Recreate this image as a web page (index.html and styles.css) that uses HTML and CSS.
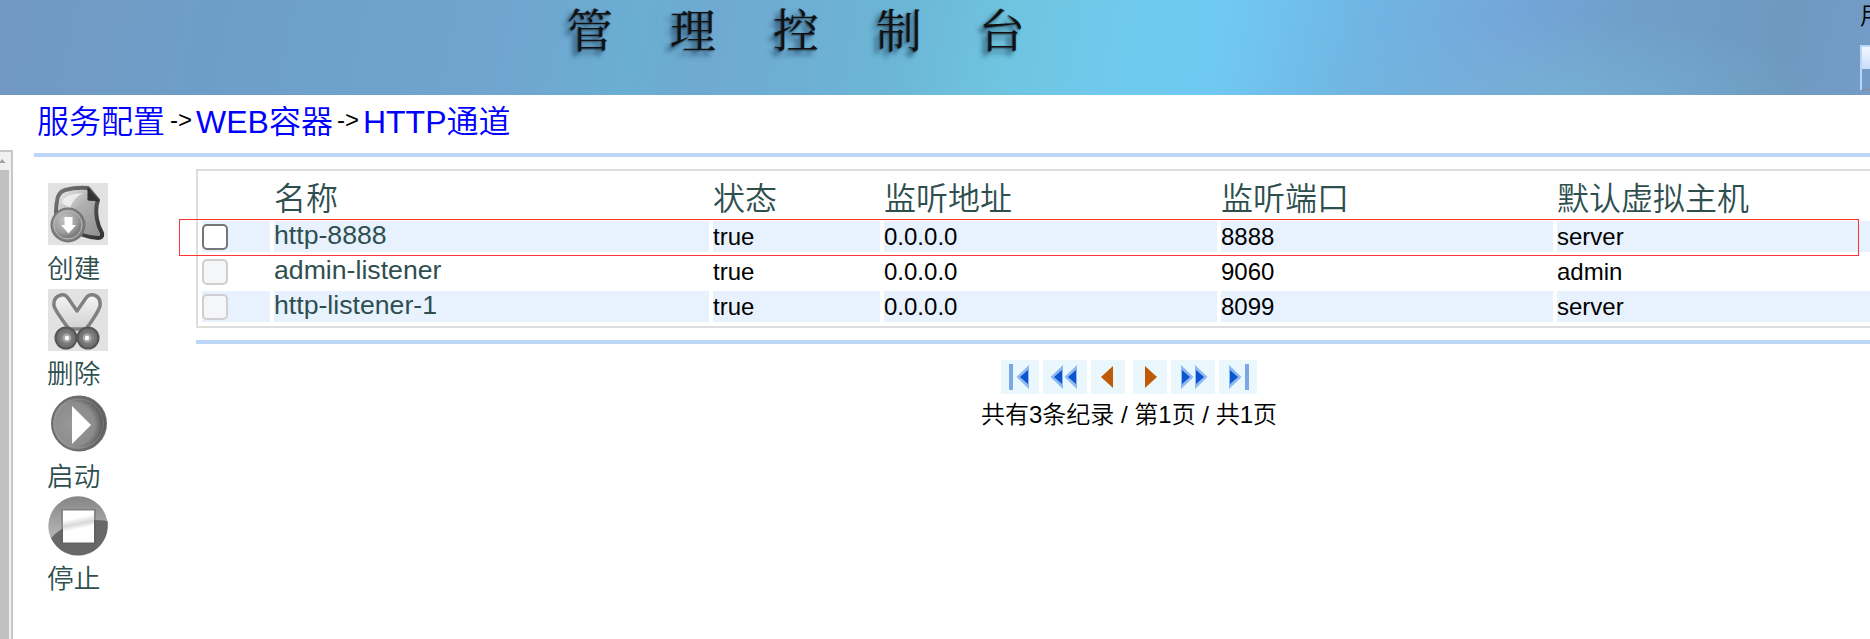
FILE: index.html
```html
<!DOCTYPE html>
<html lang="zh-CN">
<head>
<meta charset="utf-8">
<title>管理控制台</title>
<link rel="stylesheet" href="styles.css">
</head>
<body>
<header class="banner">
  <h1 class="title"><span>管</span><span>理</span><span>控</span><span>制</span><span>台</span></h1>
  <div class="user"><span class="user-label">用户</span><button class="user-button"></button></div>
</header>
<div class="body">
  <aside class="tree"><div class="scrollbar"><svg class="up" viewBox="0 0 9 18"><path d="M-1 11h6.500L2 7z" fill="#a0a0a0"/></svg><div class="thumb"></div></div></aside>
  <main class="main">
    <nav class="crumbs"><a>服务配置</a><span class="sep">-&gt;</span><a>WEB容器</a><span class="sep">-&gt;</span><a>HTTP通道</a></nav>
    <div class="columns">
      <div class="tools">
        <a class="tool create"><svg viewBox="0 0 60 62">
          <defs>
            <linearGradient id="g1" x1="0" y1="0" x2="1" y2="1"><stop offset="0" stop-color="#f4f4f4"/><stop offset=".45" stop-color="#b0b0b0"/><stop offset="1" stop-color="#8c8c8c"/></linearGradient>
            <linearGradient id="g2" x1="0" y1="0" x2="1" y2="1"><stop offset="0" stop-color="#777"/><stop offset="1" stop-color="#333"/></linearGradient>
            <radialGradient id="g3" cx=".4" cy=".35"><stop offset="0" stop-color="#c4c4c4"/><stop offset=".8" stop-color="#999"/><stop offset="1" stop-color="#808080"/></radialGradient>
          </defs>
          <path d="M0 0h60v62H0z" fill="#e2e2e2"/>
          <g class="soft-edge">
          <path d="M9 18Q10 9 17 7Q28 4 40 5L50 17Q47 25 49 36Q50 43 54 50Q55 55 50 55Q43 55 35 52L9 40Q7 29 9 18z" fill="url(#g1)" stroke="url(#g2)" stroke-width="4" stroke-linejoin="round"/>
          <path d="M40 5l11 13-11-1z" fill="#333" stroke="#333"/><path d="M14 20q1-9 21-10-9 4-13 15z" fill="#f4f4f4" opacity=".8"/>
          <circle cx="20" cy="42" r="16.500" fill="url(#g3)" stroke="#777" stroke-width="2"/><circle cx="20" cy="42" r="14" fill="none" stroke="#bbb"/>
          <path d="M16.500 34h8v8H28L20.500 50.500 13 42h3.500z" fill="#fff"/>
          </g>
        </svg><span>创建</span></a>
        <a class="tool delete"><svg viewBox="0 0 60 62">
          <defs><linearGradient id="g4" x1="0" y1="0" x2="0" y2="1"><stop offset="0" stop-color="#f5f5f5"/><stop offset="1" stop-color="#d0d0d0"/></linearGradient>
          <radialGradient id="g5"><stop offset="0" stop-color="#a8a8a8"/><stop offset=".6" stop-color="#787878"/><stop offset="1" stop-color="#686868"/></radialGradient></defs>
          <path d="M0 0h60v62H0z" fill="#e2e2e2"/>
          <g class="soft-edge">
          <path d="M13 6Q5 8 6 17Q8 23 21 40H38Q50 24 52 17Q53 8 46 6Q41 5 38 9L29 22L20 9Q17 5 13 6z" fill="url(#g4)" stroke="#808080" stroke-width="3.500" stroke-linejoin="round"/>
          <g fill="url(#g5)" stroke="#555" stroke-width="2"><circle cx="18" cy="49" r="10.500"/><circle cx="40" cy="49" r="10.500"/></g>
          <g fill="#fff" stroke="#aaa" stroke-width="2"><circle cx="19" cy="49" r="3.200"/><circle cx="39" cy="49" r="3.200"/></g>
          </g>
        </svg><span>删除</span></a>
        <a class="tool start"><svg viewBox="0 0 60 60">
          <defs><radialGradient id="g6" cx=".38" cy=".52" r=".62"><stop offset="0" stop-color="#999"/><stop offset=".65" stop-color="#8c8c8c"/><stop offset="1" stop-color="#484848"/></radialGradient></defs>
          <g class="soft-edge">
          <circle cx="31" cy="29.500" r="27" fill="url(#g6)" stroke="#6c6c6c" stroke-width="2"/><circle cx="31" cy="29.500" r="24.500" fill="none" stroke="#a5a5a5" opacity=".35" stroke-width="1.500"/>
          <path d="M24 12L43 31 24 50z" fill="#fff"/>
          </g>
        </svg><span>启动</span></a>
        <a class="tool stop"><svg viewBox="0 0 60 60">
          <defs><linearGradient id="g7" x1="0" y1="0" x2="0" y2="1"><stop offset="0" stop-color="#858585"/><stop offset=".6" stop-color="#b0b0b0"/></linearGradient>
          <linearGradient id="g8" x1="0" y1="0" x2="0.200" y2="1"><stop offset="0" stop-color="#fff"/><stop offset=".3" stop-color="#fff"/><stop offset=".5" stop-color="#d8d8d8"/><stop offset=".65" stop-color="#fff"/></linearGradient></defs>
          <g class="soft-edge">
          <circle cx="30" cy="30" r="29.700" fill="url(#g7)"/>
          <path d="M3 42Q24 20 59.700 25V30A29.700 29.700 0 0 1 3 42z" fill="#686868"/>
          <path d="M13 13h35v35H13z" fill="#555" opacity=".3"/><path d="M15 14.500h31v32H15z" fill="url(#g8)"/>
          </g>
        </svg><span>停止</span></a>
      </div>
      <div class="content">
        <table class="list">
          <colgroup><col class="c1"><col class="c2"><col class="c3"><col class="c4"><col class="c5"><col class="c6"></colgroup>
          <tr class="head"><th></th><th>名称</th><th>状态</th><th>监听地址</th><th>监听端口</th><th>默认虚拟主机</th></tr>
          <tr class="odd"><td><i class="box"></i></td><td class="name">http-8888</td><td>true</td><td>0.0.0.0</td><td>8888</td><td>server</td></tr>
          <tr><td><i class="box off"></i></td><td class="name">admin-listener</td><td>true</td><td>0.0.0.0</td><td>9060</td><td>admin</td></tr>
          <tr class="odd"><td><i class="box off"></i></td><td class="name">http-listener-1</td><td>true</td><td>0.0.0.0</td><td>8099</td><td>server</td></tr>
        </table>
        <div class="highlight"></div>
        <div class="rule"></div>
        <div class="pager">
          <svg viewBox="0 0 38 34" width="38"><path class="bar" d="M8 4h4v26H8z"/><path class="soft" d="M28 5v24L15.500 17z"/><path class="blue" d="M27 10v14l-8-7z"/></svg>
          <svg viewBox="0 0 44 34" width="44"><path class="soft" d="M20 5v24L7.500 17zM34 5v24L21.500 17z"/><path class="blue" d="M19 10v14l-8-7zM33 10v14l-8-7z"/></svg>
          <svg viewBox="0 0 34 34" width="34"><path class="orange" d="M22 6v22L10 17z"/></svg>
          <svg class="next" viewBox="0 0 34 34" width="34"><path class="orange" d="M12 6v22l12-11z"/></svg>
          <svg viewBox="0 0 44 34" width="44"><path class="soft" d="M10 5v24l12.500-12zM24 5v24l12.500-12z"/><path class="blue" d="M11 10v14l8-7zM25 10v14l8-7z"/></svg>
          <svg viewBox="0 0 38 34" width="38"><path class="soft" d="M10 5v24l12.500-12z"/><path class="blue" d="M11 10v14l8-7z"/><path class="bar" d="M26 4h4v26h-4z"/></svg>
        </div>
        <p class="summary">共有3条纪录 / 第1页 / 共1页</p>
      </div>
    </div>
  </main>
</div>
</body>
</html>
```
FILE: styles.css
```css
* { box-sizing: border-box; }
body { margin: 0; height: 639px; overflow: hidden; background: #fff; color: #000;
  font: 350 24px/30px "Liberation Sans", "Noto Sans CJK SC", sans-serif; }
.banner { height: 95px; display: flex; justify-content: space-between;
  background:
    radial-gradient(ellipse 260px 85px at 1560px 100px, rgba(122,184,214,.6), transparent),
    linear-gradient(102deg, #7299c2 0, #6d9fc9 14%, #70a5d0 27%, #6aaed2 34%, #6fa9d1 38%, #6cb6d6 48%, #6fc5e0 54%, #70caee 60%, #70c9f1 65%, #70b6e4 72%, #74a6da 80%, #709fca 86%, #6e99bf 95%, #739dc8 100%); }
.title { margin: 2px 0 0 567px; display: flex; gap: 57px; color: #111;
  font: 400 46px/50px "Noto Serif CJK SC", "Noto Sans CJK SC", serif;
  text-shadow: -5px 5px 5px rgba(20,50,80,.75), -1px 1px 2px rgba(0,0,0,.6); }
.user { width: 10px; height: 95px; white-space: nowrap; overflow: hidden; }
.user-label { display: block; height: 45px; padding-top: 1px; }
.user-button { display: block; width: 80px; height: 46px; border: 2px solid #bcd6f8; border-bottom-color: #8290a8; border-radius: 0; background: linear-gradient(#f2f7ff, #c9ddfa 22px, #729bc5 22px); }
.body { display: flex; height: 544px; }
.tree { width: 34px; padding-top: 55px; }
.scrollbar { width: 13px; height: 489px; border: 2px solid #c8c8c8; border-width: 2px 2px 0 0; background: #f0f0f0; }
.up { display: block; width: 9px; height: 18px; }
.thumb { width: 9px; height: 480px; background: #c1c1c1; }
.main { flex: 1; min-width: 0; }
.crumbs { display: flex; align-items: flex-start; height: 62px; padding: 3px 0 0 3px; border-bottom: 4px solid #bcd6f8; }
.crumbs a { font-size: 32px; line-height: 48px; color: #00f; white-space: nowrap; }
.sep { margin: 0 4px; line-height: 44px; }
.sep:first-of-type { margin-left: 5px; }
.columns { display: flex; }
.tools { width: 162px; padding: 26px 0 0 14px; color: #2f4f4f; }
.tool { display: flex; flex-direction: column; height: 103px; font-size: 26.67px; line-height: 48px; }
.tool span { height: 42px; margin-left: -1px; }
.tool svg { display: block; width: 60px; height: 60px; flex: none; }
.soft-edge { filter: blur(.6px); }
.create { height: 105px; }
.delete { height: 104px; padding-top: 1px; }
.create svg, .delete svg { height: 62px; }
.delete span { margin-top: -1px; }
.start { padding-top: 2px; }
.start span { margin-top: -1px; }
.stop { padding-top: 1px; }
.stop span { margin-top: -1px; }
.content { flex: 1; min-width: 0; padding-top: 12px; }
.list { width: 1729px; table-layout: fixed; border: 2px solid #ddd; border-collapse: separate; border-spacing: 4px; }
.c1 { width: 68px; } .c2 { width: 435px; } .c3 { width: 167px; } .c4 { width: 333px; } .c5 { width: 332px; }
.list th { height: 42px; padding: 6px 0 0; text-align: left; font-size: 32px; line-height: 36px; font-weight: 350; color: #2f4f4f; }
.list td { height: 31px; padding: 0; line-height: 31px; }
.odd td { background: #e8f2ff; }
.list .name { font-size: 26.67px; line-height: 29px; padding-bottom: 2px; color: #2f4f4f; }
.box { display: block; width: 26px; height: 26px; border: 2px solid #767676; border-radius: 5px; background: #fff; }
.off { border-color: #cfcfd1; background: #f5f6f8; }
.highlight { position: absolute; left: 179px; top: 219px; width: 1680px; height: 37px; border: 1px solid #f33; }
.rule { margin-top: 12px; height: 4px; background: #bcd6f8; }
.pager { display: flex; gap: 4px; margin: 16px 0 0 805px; }
.pager svg { height: 34px; flex: none; background: #eaf7fd; }
.pager .next { margin-left: 4px; }
.bar { fill: #7ba7e8; } .soft { fill: #8db8f0; } .blue { fill: #0d55cf; } .orange { fill: #c05a05; }
.summary { margin: 6px 0 0 785px; white-space: nowrap; }
```
